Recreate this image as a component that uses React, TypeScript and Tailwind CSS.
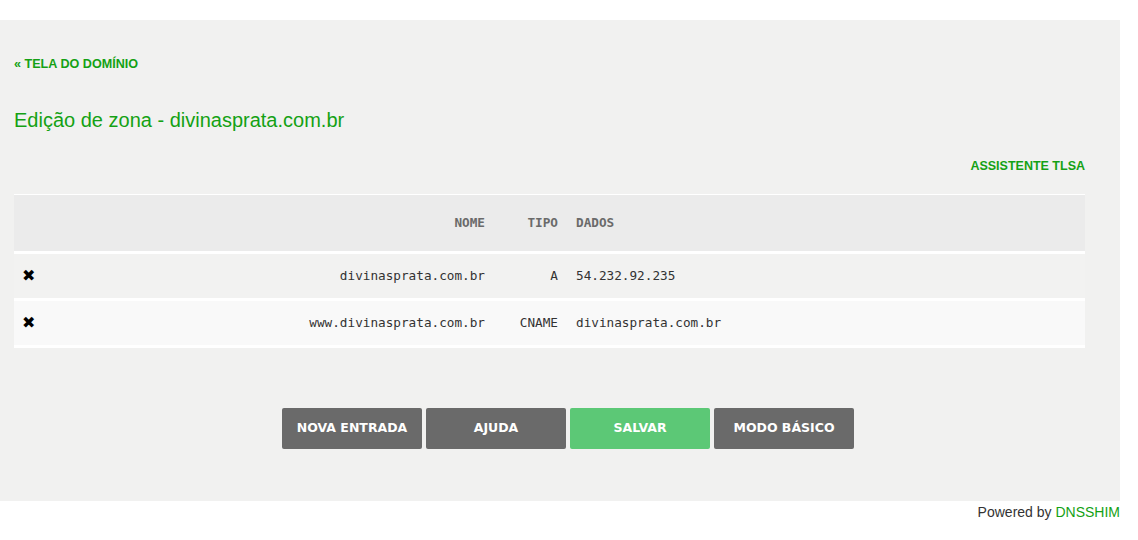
import React from 'react';

const records = [
  { name: 'divinasprata.com.br', type: 'A', data: '54.232.92.235' },
  { name: 'www.divinasprata.com.br', type: 'CNAME', data: 'divinasprata.com.br' },
];

const mono = "font-['DejaVu_Sans_Mono','Liberation_Mono',monospace] text-[12.7px]";

export default function App() {
  return (
    <div className="w-[1138px] h-[540px] bg-white font-['Liberation_Sans',Arial,sans-serif]">
      <div className="h-5" />
      <div className="w-[1120px] h-[481px] bg-[#f1f1f0] px-[14px] pt-[36px] box-border">
        <a className="block text-[12.6px] font-bold text-[#14a114] leading-4">« TELA DO DOMÍNIO</a>
        <h1 className="mt-[36px] text-[20px] text-[#14a114] leading-6">Edição de zona - divinasprata.com.br</h1>
        <div className="w-[1071px] flex justify-end mt-[26px]">
          <a className="text-[12.5px] font-bold text-[#14a114] leading-4">ASSISTENTE TLSA</a>
        </div>
        <div className="w-[1071px] mt-[20px]">
          <div className={`flex items-center h-[60px] bg-[#ebebeb] border-t border-white border-b-[3px] ${mono} font-bold text-[#6a6a6a]`}>
            <div className="w-[471px] text-right">NOME</div>
            <div className="w-[73px] text-right">TIPO</div>
            <div className="pl-[18px]">DADOS</div>
          </div>
          {records.map((r, i) => (
            <div
              key={r.name}
              className={`flex items-center h-[47px] border-b-[3px] border-white ${mono} text-[#333] ${i % 2 ? 'bg-[#f9f9f9]' : 'bg-[#f2f2f1]'}`}
            >
              <div className="w-[471px] flex items-center">
                <span className="pl-[8px] w-[40px] text-[16px] text-black leading-none font-['DejaVu_Sans',sans-serif]">✖</span>
                <span className="flex-1 text-right">{r.name}</span>
              </div>
              <div className="w-[73px] text-right">{r.type}</div>
              <div className="pl-[18px]">{r.data}</div>
            </div>
          ))}
        </div>
        <div className="flex justify-center gap-[4px] mt-[60px] pl-[16px] w-[1092px] box-border">
          {[
            { label: 'NOVA ENTRADA', bg: 'bg-[#6a6a6a]' },
            { label: 'AJUDA', bg: 'bg-[#6a6a6a]' },
            { label: 'SALVAR', bg: 'bg-[#5cc876]' },
            { label: 'MODO BÁSICO', bg: 'bg-[#6a6a6a]' },
          ].map((b) => (
            <button
              key={b.label}
              className={`w-[140px] h-[41px] rounded-[2px] ${b.bg} text-white text-[12.5px] font-bold font-['DejaVu_Sans',sans-serif]`}
            >
              {b.label}
            </button>
          ))}
        </div>
      </div>
      <div className="w-[1120px] text-right text-[14px] leading-5 mt-[1px] text-[#333]">
        Powered by <span className="text-[#14a114]">DNSSHIM</span>
      </div>
    </div>
  );
}
